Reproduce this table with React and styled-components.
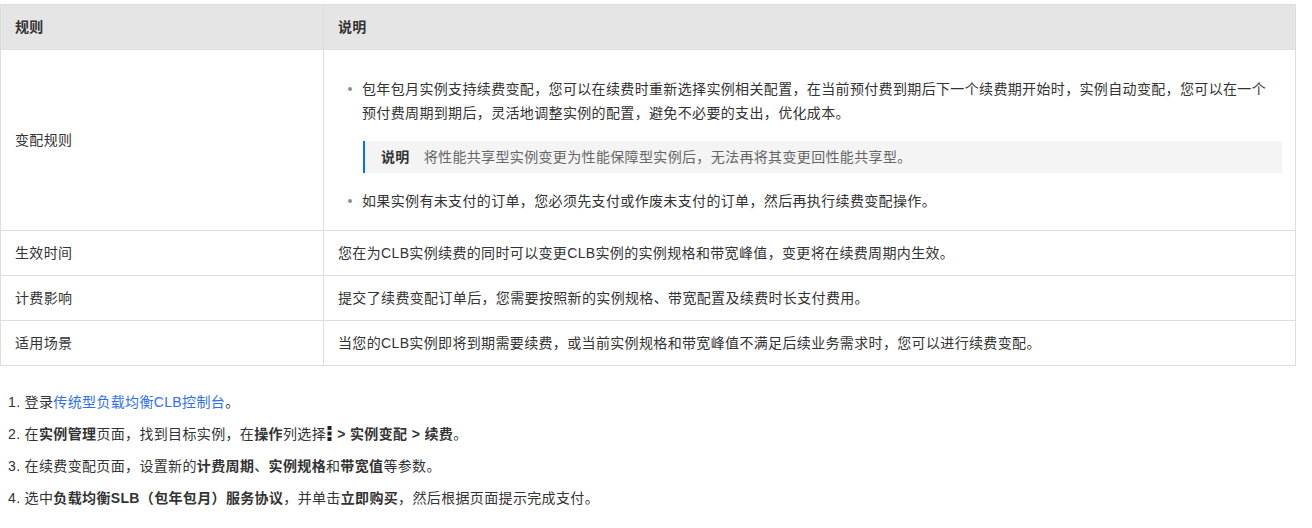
import React from "react";
import styled, { createGlobalStyle } from "styled-components";

const GlobalStyle = createGlobalStyle`
  html, body { margin: 0; padding: 0; background: #fff; }
  body {
    font-family: "Liberation Sans", "Noto Sans CJK SC", sans-serif;
    font-size: 14px;
    color: #333;
    letter-spacing: 0.35px;
  }
`;

const Page = styled.div`
  padding-top: 4px;
  width: 1312px;
`;

const Table = styled.table`
  width: 1296px;
  border-collapse: collapse;
  border: 1px solid #ddd;
  table-layout: fixed;
`;

const HeadCell = styled.th`
  background: #e5e5e5;
  border: 1px solid #ddd;
  height: 45px;
  padding: 0 14px;
  text-align: left;
  font-weight: bold;
  line-height: 24px;
  width: ${(p) => p.$w || "auto"};
  box-sizing: border-box;
`;

const Row = styled.tr`
  height: ${(p) => p.$h || "45px"};
`;

const Cell = styled.td`
  border: 1px solid #ddd;
  padding: ${(p) => p.$pad || "0 14px"};
  line-height: 24px;
  vertical-align: middle;
`;

const Bullets = styled.ul`
  list-style: none;
  margin: 0;
  padding: 0;
`;

const Item = styled.li`
  display: flex;
  align-items: flex-start;
  padding-right: 8px;
`;

const Dot = styled.span`
  flex: none;
  width: 4px;
  height: 4px;
  border-radius: 50%;
  background: #8c8c8c;
  margin: 10px 10px 0 9px;
`;

const Note = styled.div`
  display: flex;
  align-items: center;
  gap: 14px;
  margin: 16px 0 16px 24px;
  height: 32px;
  padding: 0 16px;
  background: #f4f4f4;
  border-left: 2px solid #006eff;
  color: #666;
`;

const NoteLabel = styled.b`
  color: #333;
  font-weight: bold;
`;

const Steps = styled.div`
  padding: 24px 0 0 8px;
`;

const Step = styled.p`
  margin: 0 0 8px;
  line-height: 24px;
`;

const Strong = styled.b`
  font-weight: bold;
`;

const Link = styled.a`
  color: #2d6ff7;
  text-decoration: none;
`;

const Kebab = () => (
  <svg width="5" height="15" viewBox="0 0 5 15" style={{ verticalAlign: "-2px", margin: "0 1px" }}>
    <rect x="0.5" y="0" width="4" height="4" fill="#222" />
    <rect x="0.5" y="5.5" width="4" height="4" fill="#222" />
    <rect x="0.5" y="11" width="4" height="4" fill="#222" />
  </svg>
);

export default function App() {
  return (
    <Page>
      <GlobalStyle />
      <Table>
        <thead>
          <tr>
            <HeadCell $w="323px">规则</HeadCell>
            <HeadCell>说明</HeadCell>
          </tr>
        </thead>
        <tbody>
          <tr>
            <Cell>变配规则</Cell>
            <Cell $pad="27px 13px 17px 15px">
              <Bullets>
                <Item>
                  <Dot />
                  <span>
                    包年包月实例支持续费变配，您可以在续费时重新选择实例相关配置，在当前预付费到期后下一个续费期开始时，实例自动变配，您可以在一个预付费周期到期后，灵活地调整实例的配置，避免不必要的支出，优化成本。
                  </span>
                </Item>
              </Bullets>
              <Note>
                <NoteLabel>说明</NoteLabel>
                <span>将性能共享型实例变更为性能保障型实例后，无法再将其变更回性能共享型。</span>
              </Note>
              <Bullets>
                <Item>
                  <Dot />
                  <span>如果实例有未支付的订单，您必须先支付或作废未支付的订单，然后再执行续费变配操作。</span>
                </Item>
              </Bullets>
            </Cell>
          </tr>
          <Row>
            <Cell>生效时间</Cell>
            <Cell>您在为CLB实例续费的同时可以变更CLB实例的实例规格和带宽峰值，变更将在续费周期内生效。</Cell>
          </Row>
          <Row>
            <Cell>计费影响</Cell>
            <Cell>提交了续费变配订单后，您需要按照新的实例规格、带宽配置及续费时长支付费用。</Cell>
          </Row>
          <Row>
            <Cell>适用场景</Cell>
            <Cell>当您的CLB实例即将到期需要续费，或当前实例规格和带宽峰值不满足后续业务需求时，您可以进行续费变配。</Cell>
          </Row>
        </tbody>
      </Table>
      <Steps>
        <Step>
          1. 登录<Link href="#">传统型负载均衡CLB控制台</Link>。
        </Step>
        <Step>
          2. 在<Strong>实例管理</Strong>页面，找到目标实例，在<Strong>操作</Strong>列选择
          <Kebab />
          <Strong> &gt; 实例变配 &gt; 续费</Strong>。
        </Step>
        <Step>
          3. 在续费变配页面，设置新的<Strong>计费周期</Strong>、<Strong>实例规格</Strong>和
          <Strong>带宽值</Strong>等参数。
        </Step>
        <Step>
          4. 选中<Strong>负载均衡SLB（包年包月）服务协议</Strong>，并单击<Strong>立即购买</Strong>
          ，然后根据页面提示完成支付。
        </Step>
      </Steps>
    </Page>
  );
}
